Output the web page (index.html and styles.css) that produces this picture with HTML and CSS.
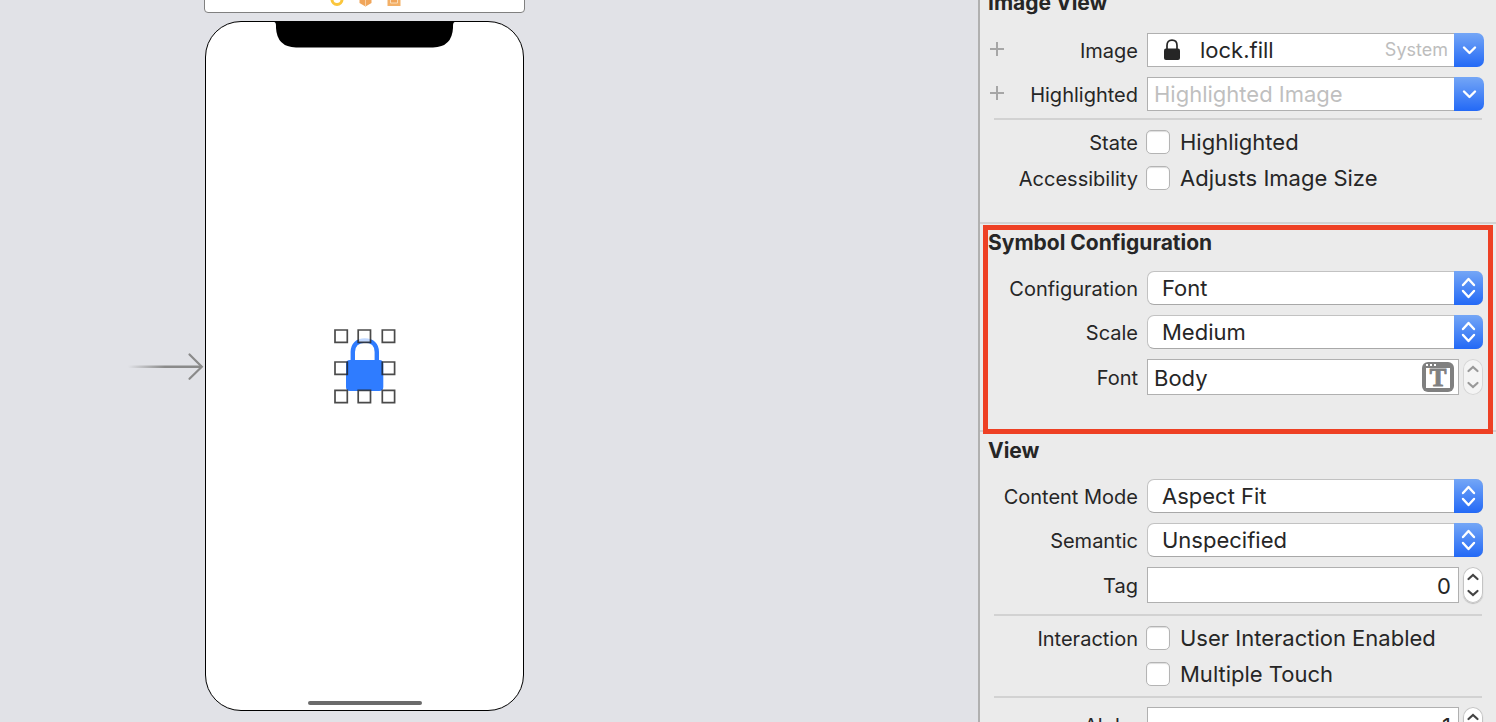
FILE: index.html
```html
<!DOCTYPE html>
<html lang="en">
<head>
<meta charset="utf-8">
<title>Interface Builder</title>
<link rel="stylesheet" href="styles.css">
</head>
<body>
<svg class="defs" aria-hidden="true">
  <symbol id="down" viewBox="0 0 30 34"><path d="M10 14.500l5.500 5.500 5.500-5.500" fill="none" stroke="#fff" stroke-width="2.400" stroke-linecap="round" stroke-linejoin="round"/></symbol>
  <symbol id="updown" viewBox="0 0 29 34"><path d="M9 14l5.500-6 5.500 6M9 20l5.500 6 5.500-6" fill="none" stroke="#fff" stroke-width="2.400" stroke-linecap="round" stroke-linejoin="round"/></symbol>
  <symbol id="step-up" viewBox="0 0 20 18"><path d="M5.500 12l4.500-4 4.500 4" fill="none" stroke="currentColor" stroke-width="2.200" stroke-linecap="round" stroke-linejoin="miter"/></symbol>
  <symbol id="step-down" viewBox="0 0 20 18"><path d="M5.500 6l4.500 4 4.500-4" fill="none" stroke="currentColor" stroke-width="2.200" stroke-linecap="round" stroke-linejoin="miter"/></symbol>
  <symbol id="plus" viewBox="0 0 14 14"><path d="M0 7h14M7 0v14" stroke="#a6a6a6" stroke-width="2"/></symbol>
</svg>

<div class="app">
  <main class="canvas">
    <div class="scene-bar">
      <svg class="scene-icons" width="72" height="16" viewBox="0 0 72 16" aria-hidden="true">
        <circle cx="8" cy="8.500" r="5" fill="#fff" stroke="#fbc63c" stroke-width="3"/>
        <path d="M36.500 1l6 3v8l-6 3.500-6-3.500V4z" fill="#f0a55a"/>
        <path d="M30.500 4.500l6 3 6-3M36.500 7.500v8" fill="none" stroke="#f8cfa3" stroke-width="1"/>
        <path d="M58.500 2h13v13h-13z" fill="#f3b067"/>
        <path d="M61.500 5h7v7h-7z" fill="#f0a55a" stroke="#fbdcb8"/>
        <path d="M65 8h3" stroke="#fbdcb8"/>
      </svg>
    </div>
    <svg class="entry-arrow" width="78" height="30" viewBox="0 0 78 30" aria-hidden="true">
      <defs><linearGradient id="fade" x1="0" x2="1"><stop offset="0" stop-color="#8a8a8a" stop-opacity="0"/><stop offset=".5" stop-color="#8a8a8a"/></linearGradient></defs>
      <path d="M1 13.500h74v2.500H1z" fill="url(#fade)"/>
      <path d="M62.500 2.500l12.300 12.300-12.300 12" fill="none" stroke="#8a8a8a" stroke-width="2.200" stroke-linecap="round"/>
    </svg>
    <div class="phone">
      <svg class="notch" width="181" height="26" viewBox="0 0 181 26" aria-hidden="true"><path d="M0 0h181q-2 0-2 4v2q-1 19-20 19.500H22Q3 25 2 6V4Q2 0 0 0z"/></svg>
      <div class="home-bar"></div>
    </div>
    <svg class="selected-image" width="64" height="76" viewBox="0 0 64 76" role="img" aria-label="Selected lock image">
      <rect x="13" y="32" width="37.300" height="31" rx="4" fill="#2f7cff"/>
      <path d="M19.800 33V24c0-7 4.500-11.500 12-11.500s12 4.500 12 11.500v9" fill="none" stroke="#2f7cff" stroke-width="4.400"/>
      <g stroke="#222" stroke-opacity=".82" stroke-width="1.700" fill="#fff" fill-opacity=".7">
        <path d="M2 2h12.300v12.300H2zM25.200 2h12.300v12.300H25.200zM49.300 2h12.300v12.300H49.300z"/>
        <path fill-opacity="0" d="M2 34h12.300v12.300H2zM49.300 34h12.300v12.300H49.300z"/>
        <path d="M2 62.300h12.300v12.300H2zM25.200 62.300h12.300v12.300H25.200zM49.300 62.300h12.300v12.300H49.300z"/>
      </g>
    </svg>
  </main>

  <aside class="inspector">
    <section class="group first">
      <h2>Image View</h2>
      <div class="rows">
        <div class="row">
          <div class="name"><button class="add" aria-label="Add image variation"><svg width="14" height="14"><use href="#plus"/></svg></button><label for="image">Image</label></div>
          <div class="combo">
            <input class="text with-icon" id="image" type="text" value="lock.fill">
            <svg class="lock" width="16" height="22" viewBox="0 0 16 22" aria-hidden="true"><rect x="0" y="9.500" width="16" height="11.500" rx="2" fill="#262626"/><path d="M3 11V6.500Q3 1.200 8 1.200T13 6.500V11" fill="none" stroke="#262626" stroke-width="1.700"/></svg>
            <span class="origin">System</span>
            <button class="open" aria-label="Choose image"><svg width="30" height="34"><use href="#down"/></svg></button>
          </div>
        </div>
        <div class="row">
          <div class="name"><button class="add" aria-label="Add highlighted variation"><svg width="14" height="14"><use href="#plus"/></svg></button><label for="highlighted">Highlighted</label></div>
          <div class="combo">
            <input class="text" id="highlighted" type="text" placeholder="Highlighted Image">
            <button class="open" aria-label="Choose highlighted image"><svg width="30" height="34"><use href="#down"/></svg></button>
          </div>
        </div>
      </div>
      <hr>
      <div class="checks">
        <div class="row"><div class="name"><span>State</span></div><label class="check"><input type="checkbox">Highlighted</label></div>
        <div class="row"><div class="name"><span>Accessibility</span></div><label class="check"><input type="checkbox">Adjusts Image Size</label></div>
      </div>
    </section>

    <section class="group marked">
      <h2>Symbol Configuration</h2>
      <div class="rows">
        <div class="row"><div class="name"><label for="configuration">Configuration</label></div>
          <div class="popup"><select id="configuration"><option>Font</option></select><svg class="arrows" width="29" height="34"><use href="#updown"/></svg></div></div>
        <div class="row"><div class="name"><label for="scale">Scale</label></div>
          <div class="popup"><select id="scale"><option>Medium</option></select><svg class="arrows" width="29" height="34"><use href="#updown"/></svg></div></div>
        <div class="row"><div class="name"><label for="font">Font</label></div>
          <div class="stepped">
            <input class="text tall" id="font" type="text" value="Body">
            <button class="font-button" aria-label="Choose font"><svg width="32" height="30" viewBox="0 0 32 30"><rect width="32" height="30" rx="6" fill="#808080"/><path d="M4 6h24v20H4z" fill="#fff"/><path d="M4 2h2v2H4zM8 2h2v2H8zM12 2h2v2h-2z" fill="#fff"/><text class="font-letter" x="16" y="24" text-anchor="middle">T</text></svg></button>
            <div class="stepper disabled"><button disabled aria-label="Larger"><svg width="20" height="18"><use href="#step-up"/></svg></button><button disabled aria-label="Smaller"><svg width="20" height="18"><use href="#step-down"/></svg></button></div>
          </div></div>
      </div>
    </section>

    <section class="group">
      <h2>View</h2>
      <div class="rows">
        <div class="row"><div class="name"><label for="mode">Content Mode</label></div>
          <div class="popup"><select id="mode"><option>Aspect Fit</option></select><svg class="arrows" width="29" height="34"><use href="#updown"/></svg></div></div>
        <div class="row"><div class="name"><label for="semantic">Semantic</label></div>
          <div class="popup"><select id="semantic"><option>Unspecified</option></select><svg class="arrows" width="29" height="34"><use href="#updown"/></svg></div></div>
        <div class="row"><div class="name"><label for="tag">Tag</label></div>
          <div class="stepped"><input class="text tall number" id="tag" type="text" value="0">
            <div class="stepper"><button aria-label="Increase tag"><svg width="20" height="18"><use href="#step-up"/></svg></button><button aria-label="Decrease tag"><svg width="20" height="18"><use href="#step-down"/></svg></button></div></div></div>
      </div>
      <hr class="loose">
      <div class="checks">
        <div class="row"><div class="name"><span>Interaction</span></div><label class="check"><input type="checkbox">User Interaction Enabled</label></div>
        <div class="row"><div class="name"></div><label class="check"><input type="checkbox">Multiple Touch</label></div>
      </div>
      <hr class="loose">
      <div class="rows">
        <div class="row"><div class="name"><label for="alpha">Alpha</label></div>
          <div class="stepped"><input class="text tall number" id="alpha" type="text" value="1">
            <div class="stepper"><button aria-label="Increase alpha"><svg width="20" height="18"><use href="#step-up"/></svg></button><button aria-label="Decrease alpha"><svg width="20" height="18"><use href="#step-down"/></svg></button></div></div></div>
      </div>
    </section>
  </aside>
</div>
</body>
</html>
```

FILE: styles.css
```css
* { box-sizing: border-box; }
body {
  margin: 0;
  font-family: Inter, "Liberation Sans", sans-serif;
  font-size: 22px;
  color: #262626;
}
button { padding: 0; border: 0; background: none; color: inherit; font: inherit; }
svg { display: block; }
.defs { position: absolute; width: 0; height: 0; }

.app { display: flex; height: 100vh; overflow: hidden; }

/* Canvas */
.canvas { position: relative; flex: 1; overflow: hidden; background: #e1e2e7; }
.scene-bar {
  position: absolute; left: 204px; top: -30px; width: 321px; height: 43px;
  border: 1px solid #808080; border-radius: 4px; background: #fff;
}
.scene-icons { position: absolute; left: 124px; top: 20px; }
.entry-arrow { position: absolute; left: 127px; top: 352px; }
.phone {
  position: absolute; left: 205px; top: 21px; width: 319px; height: 690px;
  border: 1px solid #000; border-radius: 36px; background: #fff;
}
.notch { position: absolute; left: 68px; top: 0; }
.home-bar {
  position: absolute; left: 102px; bottom: 5px; width: 114px; height: 4px;
  border-radius: 2px; background: #6b6b6b;
}
.selected-image { position: absolute; left: 333px; top: 328px; }

/* Inspector */
.inspector { flex: none; width: 518px; border-left: 2px solid #b0b0b0; background: #ebebeb; }
.group { position: relative; border-top: 2px solid #d2d2d2; padding-bottom: 35px; }
.group.first { margin-top: -18px; padding-bottom: 32px; }
.group.marked { z-index: 1; }
.group.marked::after {
  content: ""; position: absolute; inset: 1px 3px -4px 3px;
  border: 5px solid #ee4024; pointer-events: none;
}
h2 { margin: 0; padding: 6px 8px 15px; font-size: 21px; line-height: 26px; font-weight: 700; }
.first h2 { padding-bottom: 17px; }
.rows { display: grid; gap: 10px; }
.checks { display: grid; gap: 12px; }
.row {
  display: grid; grid-template-columns: 158px minmax(0, 1fr); column-gap: 9px;
  align-items: center; padding-right: 13px;
}
.name { display: flex; justify-content: flex-end; align-items: center; padding-top: 2px; font-size: 20px; line-height: 22px; }
.add { margin: 0 auto 4px 10px; }
hr { height: 2px; margin: 7px 14px 10px; border: 0; background: #d2d2d2; }
hr.loose { margin: 11px 14px 10px; }
.checks + hr.loose { margin-top: 10px; margin-bottom: 9px; }

.text {
  flex: 1; min-width: 0; height: 34px; padding: 0 7px 0 6px; border: 1px solid #b0b0b0;
  border-radius: 0; background: #fff; color: inherit; font: inherit;
}
.text.tall { height: 36px; padding-top: 2px; }
.text::placeholder { color: #bfbfbf; opacity: 1; }
.text.with-icon { padding-left: 52px; }
.number { text-align: right; }
.combo { position: relative; display: flex; margin-right: -1px; }
.combo .text { border-right: 0; }
.lock { position: absolute; left: 17px; top: 6px; }
.origin { position: absolute; right: 36px; top: 5px; font-size: 18px; line-height: 24px; color: #bdbdbd; }
.open, .arrows { background: linear-gradient(#74a6f6, #2369f6); border-radius: 0 7px 7px 0; }

.popup { position: relative; display: flex; }
select {
  appearance: none; flex: 1; min-width: 0; height: 34px; padding: 0 40px 0 14px;
  border: 1px solid #c2c2c2; border-bottom-color: #a8a8a8; border-radius: 7px;
  background: #fff; color: inherit; font: inherit;
}
.arrows { position: absolute; right: 0; top: 0; pointer-events: none; }

.stepped { position: relative; display: flex; gap: 4px; }
.font-button { position: absolute; right: 29px; top: 3px; }
.font-letter { font: bold 25px "Liberation Serif", serif; fill: #808080; stroke: #808080; stroke-width: 1px; }
.stepper {
  width: 20px; height: 36px; overflow: hidden; border-radius: 10px; background: #fff; color: #444;
  box-shadow: 0 0 0 1px #c4c4c4 inset, 0 1px 1px #bbb;
}
.stepper button { display: block; }
.stepper.disabled { background: #f4f4f4; box-shadow: 0 0 0 1px #d6d6d6 inset; }
.stepper.disabled button { color: #999; }

.check { display: flex; align-items: center; gap: 10px; height: 24px; margin-left: -1px; }
.check input {
  appearance: none; width: 24px; height: 24px; margin: 0; border: 1px solid #b4b4b4;
  border-radius: 5px; background: #fff; box-shadow: inset 0 1px 1px #ddd;
}
```
